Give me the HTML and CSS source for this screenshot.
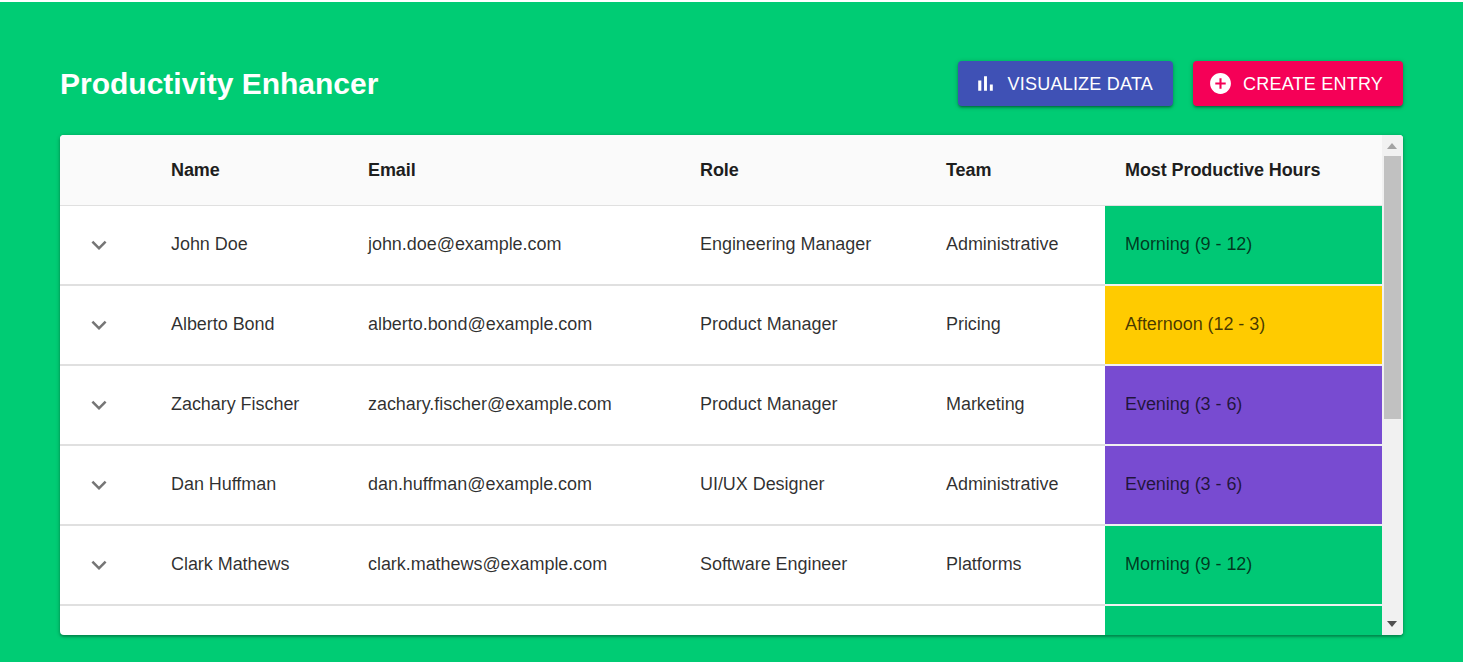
FILE: index.html
```html
<!DOCTYPE html>
<html lang="en">
<head>
<meta charset="utf-8">
<title>Productivity Enhancer</title>
<link rel="stylesheet" href="styles.css">
</head>
<body>
<main class="page">
  <header class="topbar">
    <h1 class="title">Productivity Enhancer</h1>
    <div class="actions">
      <button class="btn btn-blue" type="button">
        <svg class="btn-icon" viewBox="0 0 24 24"><path d="M5 9.2h3V19H5zM10.6 5h2.8v14h-2.8zm5.6 8H19v6h-2.8z"/></svg>
        <span class="btn-label">VISUALIZE DATA</span>
      </button>
      <button class="btn btn-pink" type="button">
        <svg class="btn-icon" viewBox="0 0 24 24"><path d="M12 2C6.48 2 2 6.48 2 12s4.48 10 10 10 10-4.48 10-10S17.52 2 12 2zm5 11h-4v4h-2v-4H7v-2h4V7h2v4h4v2z"/></svg>
        <span class="btn-label">CREATE ENTRY</span>
      </button>
    </div>
  </header>
  <section class="card">
    <div class="viewport">
      <table class="grid">
        <colgroup>
          <col class="c-exp"><col class="c-name"><col class="c-email"><col class="c-role"><col class="c-team"><col class="c-hours">
        </colgroup>
        <thead>
          <tr><th></th><th>Name</th><th>Email</th><th>Role</th><th>Team</th><th>Most Productive Hours</th></tr>
        </thead>
        <tbody>
          <tr>
            <td class="exp"><svg class="chev" viewBox="0 0 24 24"><path d="M16.59 8.59 12 13.17 7.41 8.59 6 10l6 6 6-6z"/></svg></td>
            <td>John Doe</td><td>john.doe@example.com</td><td>Engineering Manager</td><td>Administrative</td><td class="morning">Morning (9 - 12)</td>
          </tr>
          <tr>
            <td class="exp"><svg class="chev" viewBox="0 0 24 24"><path d="M16.59 8.59 12 13.17 7.41 8.59 6 10l6 6 6-6z"/></svg></td>
            <td>Alberto Bond</td><td>alberto.bond@example.com</td><td>Product Manager</td><td>Pricing</td><td class="afternoon">Afternoon (12 - 3)</td>
          </tr>
          <tr>
            <td class="exp"><svg class="chev" viewBox="0 0 24 24"><path d="M16.59 8.59 12 13.17 7.41 8.59 6 10l6 6 6-6z"/></svg></td>
            <td>Zachary Fischer</td><td>zachary.fischer@example.com</td><td>Product Manager</td><td>Marketing</td><td class="evening">Evening (3 - 6)</td>
          </tr>
          <tr>
            <td class="exp"><svg class="chev" viewBox="0 0 24 24"><path d="M16.59 8.59 12 13.17 7.41 8.59 6 10l6 6 6-6z"/></svg></td>
            <td>Dan Huffman</td><td>dan.huffman@example.com</td><td>UI/UX Designer</td><td>Administrative</td><td class="evening">Evening (3 - 6)</td>
          </tr>
          <tr>
            <td class="exp"><svg class="chev" viewBox="0 0 24 24"><path d="M16.59 8.59 12 13.17 7.41 8.59 6 10l6 6 6-6z"/></svg></td>
            <td>Clark Mathews</td><td>clark.mathews@example.com</td><td>Software Engineer</td><td>Platforms</td><td class="morning">Morning (9 - 12)</td>
          </tr>
          <tr>
            <td class="exp"></td><td></td><td></td><td></td><td></td><td class="morning"></td>
          </tr>
        </tbody>
      </table>
    </div>
    <div class="scrollbar">
      <div class="arrow arrow-up"></div>
      <div class="track"><div class="thumb"></div></div>
      <div class="arrow arrow-down"></div>
    </div>
  </section>
</main>
</body>
</html>
```
FILE: styles.css
```css
* { box-sizing: border-box; }
html, body { margin: 0; height: 100%; }
body {
  background: #00cc74;
  border-top: 2px solid #fff;
  font-family: "Liberation Sans", Arial, sans-serif;
  overflow: hidden;
}
.page { padding: 0 60px; }
.topbar {
  display: flex;
  align-items: center;
  justify-content: space-between;
  height: 133px;
  padding-top: 59px;
  padding-bottom: 29px;
}
.title {
  margin: 0;
  color: #fff;
  font-size: 30px;
  font-weight: 700;
  line-height: 45px;
}
.actions { display: flex; gap: 20px; }
.btn {
  display: flex;
  align-items: center;
  gap: 10px;
  height: 45px;
  padding: 0 20px 0 15px;
  border: 0;
  border-radius: 4px;
  color: #fff;
  font-family: inherit;
  font-size: 18px;
  letter-spacing: .22px;
  box-shadow: 0 1px 5px rgba(0,0,0,.25), 0 2px 2px rgba(0,0,0,.18), 0 3px 1px -2px rgba(0,0,0,.14);
}
.btn-label { padding-top: 2px; }
.btn-blue { background: #3f51b5; }
.btn-pink { background: #f50057; }
.btn-icon { width: 25px; height: 25px; fill: #fff; }
.card {
  display: flex;
  height: 500px;
  border-radius: 4px;
  overflow: hidden;
  background: #fff;
  box-shadow: 0 1px 4px rgba(0,0,0,.3), 0 2px 2px rgba(0,0,0,.16);
}
.viewport { flex: 1; min-width: 0; overflow: hidden; }
.grid {
  width: 100%;
  table-layout: fixed;
  border-collapse: separate;
  border-spacing: 0;
  font-size: 18px;
  letter-spacing: -.05px;
  color: rgba(0,0,0,.82);
}
.c-exp { width: 91px; }
.c-name { width: 197px; }
.c-email { width: 332px; }
.c-role { width: 246px; }
.c-team { width: 179px; }
th {
  height: 71px;
  padding: 0 20px;
  background: #fafafa;
  border-bottom: 1px solid #e0e0e0;
  color: #1e1e1e;
  text-align: left;
  font-weight: 700;
  letter-spacing: -.08px;
}
td {
  height: 80px;
  padding: 0 20px 2px;
  border-bottom: 2px solid #e0e0e0;
}
td.exp { padding: 0 0 0 24px; }
.chev { display: block; width: 30px; height: 30px; fill: #757575; }
td.morning, td.afternoon, td.evening {
  border-bottom-color: #f0f0f0;
  color: rgba(0,0,0,.72);
}
.morning { background: #00c875; }
.afternoon { background: #ffcb00; }
.evening { background: #784bd1; }
.scrollbar {
  display: flex;
  flex-direction: column;
  width: 21px;
  background: #f1f1f1;
}
.arrow { position: relative; height: 21px; background: #f1f1f1; }
.arrow::after {
  content: "";
  position: absolute;
  left: 5px;
  border-left: 5.5px solid transparent;
  border-right: 5.5px solid transparent;
}
.arrow-up::after { top: 8px; border-bottom: 6px solid #a3a3a3; }
.arrow-down::after { top: 7px; border-top: 6px solid #505050; }
.track { flex: 1; padding: 0 2px; }
.thumb { height: 263px; background: #c1c1c1; }
```
